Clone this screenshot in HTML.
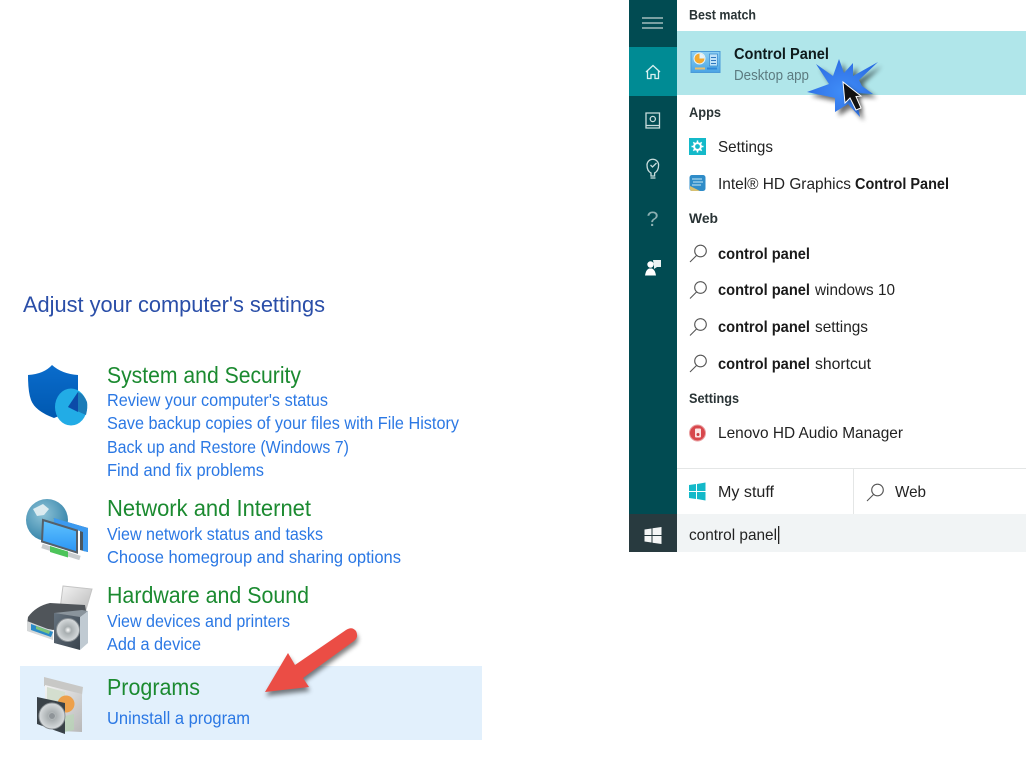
<!DOCTYPE html>
<html lang="en"><head><meta charset="utf-8"><title>Control Panel</title>
<style>
html,body{margin:0;padding:0;background:#fff;width:1026px;height:771px;overflow:hidden}
svg{display:block;filter:blur(.35px)}
text{font-family:"Liberation Sans",sans-serif;}
.t{font-size:22.5px;fill:#2a4ea8}
.h{font-size:23px;fill:#1b8a30}
.l{font-size:17.5px;fill:#2b78e4}
.b{font-size:14px;font-weight:700;fill:#2a3436}
.r{font-size:16px;fill:#222}
.rb{font-size:16px;font-weight:700;fill:#1a1a1a}
</style></head><body>
<svg width="1026" height="771" viewBox="0 0 1026 771" xmlns="http://www.w3.org/2000/svg">
<defs>
<linearGradient id="sh" x1="0" y1="0" x2="0" y2="1"><stop offset="0" stop-color="#0a6ccc"/><stop offset="1" stop-color="#0058b0"/></linearGradient>
<radialGradient id="gl" cx=".4" cy=".35" r=".75"><stop offset="0" stop-color="#8fc4d8"/><stop offset="1" stop-color="#2a7ca4"/></radialGradient>
<linearGradient id="sc" x1="0" y1="0" x2="0" y2="1"><stop offset="0" stop-color="#60c4ff"/><stop offset="1" stop-color="#2a94f4"/></linearGradient>
<linearGradient id="gr" x1="0" y1="0" x2="1" y2="1"><stop offset="0" stop-color="#f4f4f4"/><stop offset="1" stop-color="#b8b8b8"/></linearGradient>
<linearGradient id="dk" x1="0" y1="0" x2="1" y2="1"><stop offset="0" stop-color="#65727e"/><stop offset="1" stop-color="#3a444e"/></linearGradient>
<radialGradient id="cd"><stop offset="0" stop-color="#fff"/><stop offset=".3" stop-color="#a8aeb0"/><stop offset="1" stop-color="#d8dcde"/></radialGradient>
<radialGradient id="st" cx=".5" cy=".55" r=".55"><stop offset="0" stop-color="#3f8df8"/><stop offset=".7" stop-color="#3478ea"/><stop offset="1" stop-color="#2a6ee4"/></radialGradient>
<linearGradient id="cp" x1="0" y1="0" x2="0" y2="1"><stop offset="0" stop-color="#8ed0f2"/><stop offset="1" stop-color="#4aa4e4"/></linearGradient>
<filter id="s1" x="-30%" y="-30%" width="170%" height="170%"><feGaussianBlur stdDeviation="2.5"/></filter>
</defs>

<!-- left panel -->
<rect x="20" y="666" width="462" height="74" fill="#e2f0fc"/>
<text class="t" x="23" y="312" textLength="302" lengthAdjust="spacingAndGlyphs">Adjust your computer's settings</text>

<text class="h" x="107" y="383" textLength="194" lengthAdjust="spacingAndGlyphs">System and Security</text>
<text class="l" x="107" y="406" textLength="221" lengthAdjust="spacingAndGlyphs">Review your computer's status</text>
<text class="l" x="107" y="429" textLength="352" lengthAdjust="spacingAndGlyphs">Save backup copies of your files with File History</text>
<text class="l" x="107" y="453" textLength="242" lengthAdjust="spacingAndGlyphs">Back up and Restore (Windows 7)</text>
<text class="l" x="107" y="476" textLength="157" lengthAdjust="spacingAndGlyphs">Find and fix problems</text>

<text class="h" x="107" y="516" textLength="204" lengthAdjust="spacingAndGlyphs">Network and Internet</text>
<text class="l" x="107" y="540" textLength="216" lengthAdjust="spacingAndGlyphs">View network status and tasks</text>
<text class="l" x="107" y="563" textLength="294" lengthAdjust="spacingAndGlyphs">Choose homegroup and sharing options</text>

<text class="h" x="107" y="603" textLength="202" lengthAdjust="spacingAndGlyphs">Hardware and Sound</text>
<text class="l" x="107" y="627" textLength="183" lengthAdjust="spacingAndGlyphs">View devices and printers</text>
<text class="l" x="107" y="650" textLength="94" lengthAdjust="spacingAndGlyphs">Add a device</text>

<text class="h" x="107" y="695" textLength="93" lengthAdjust="spacingAndGlyphs">Programs</text>
<text class="l" x="107" y="724" textLength="143" lengthAdjust="spacingAndGlyphs">Uninstall a program</text>

<!-- shield icon -->
<path d="M28 375Q44 374 52 365Q62 374 78 375V395Q76 410 54 418Q35 411 31 400Q28 392 28 375Z" fill="url(#sh)"/>
<ellipse cx="71" cy="407" rx="16" ry="18.500" fill="#22ace6"/>
<path d="M78 392L68 407L86 415Q88 407 87 402Q84 394 78 392Z" fill="#1b7cb8"/>
<path d="M78 392L68 407L78 412Z" fill="#0c4aa8"/>

<!-- network icon -->
<circle cx="47" cy="520" r="21" fill="url(#gl)"/>
<path d="M33 509l10-5 6 5-5 6-7 1z" fill="#dcebf0"/>
<path d="M53 518l35 10v24l-8-2V530z" fill="#4a5660"/>
<path d="M54 518l34 10v24l-5-1V532l-29-9z" fill="#3c9af0"/>
<path d="M43 520l34 10.500v22l-35-11z" fill="url(#sc)" stroke="#55606a" stroke-width="2"/>
<path d="M42 546l38 12" stroke="#c8ccce" stroke-width="4.500" fill="none"/>
<path d="M50 546l18 5.500v6l-18-5.500z" fill="#4dc45a"/>

<!-- printer / hardware icon -->
<path d="M63 586l29 3-7 24-25-4z" fill="url(#gr)" stroke="#c4c4c4"/>
<path d="M28 617q8-11 22-14l35 2 3 17-35 8-26-5z" fill="#50555a"/>
<path d="M27 621l26 10v9l-26-9z" fill="#d4d7d8"/>
<path d="M31 624l22 8-2 5-20-7z" fill="#2a8ac8"/>
<path d="M36 626l14 5-1 3-13-5z" fill="#7ec47a"/>
<path d="M54 613l26 4v33l-26-7z" fill="url(#dk)"/>
<path d="M54 613l28-3 6 1-8 6z" fill="#8a949c"/>
<path d="M80 617l8-6v32l-8 7z" fill="#c0cad2"/>
<circle cx="68" cy="630" r="11.500" fill="url(#cd)" stroke="#8c9296"/>

<!-- programs icon -->
<path d="M44 677l39 10-1 8-38-9z" fill="#c8c8c6"/>
<path d="M45 685l37 9v38l-22-1-15-3z" fill="url(#gr)"/>
<path d="M47 687l18 5v30l-18-6z" fill="#d4decf"/>
<circle cx="66" cy="704" r="8.500" fill="#eda04a"/>
<path d="M65 716l9-2v16l-9 2z" fill="#b6d8b4" opacity=".6"/>
<path d="M37 697l28 6v31l-28-10z" fill="#3a4248"/>
<circle cx="52" cy="716" r="13" fill="url(#cd)" stroke="#8c9296"/>
<circle cx="52" cy="716" r="3" fill="#8e9498"/>

<!-- red arrow -->
<path d="M265 692L288 653L295 665L346 630Q352 626 356 631Q359 637 354 641L303 678L309 687Z" fill="#000" opacity=".5" filter="url(#s1)" transform="translate(1 4)"/>
<path d="M265 692L288 653L295 665L346 630Q352 626 356 631Q359 637 354 641L303 678L309 687Z" fill="#eb4d45"/>

<!-- search panel -->
<rect x="629" y="0" width="48" height="552" fill="#014b52"/>
<rect x="629" y="47" width="48" height="49" fill="#008b94"/>
<rect x="629" y="514" width="48" height="38" fill="#283a3f"/>
<rect x="677" y="514" width="349" height="38" fill="#f1f4f5"/>
<rect x="677" y="31" width="349" height="64" fill="#b0e6ea"/>
<rect x="677" y="468" width="349" height="1" fill="#e4e6e6"/>
<rect x="853" y="468" width="1" height="46" fill="#e4e6e6"/>

<!-- sidebar icons -->
<g stroke="#a2bcbd" stroke-width="1.600" fill="none">
<path d="M642 18h21M642 23h21M642 28h21"/>
</g>
<path d="M646 72l7-6.500 7 6.500M647.500 71v7.500h3.500v-4h4v4h3.500v-7.500" stroke="#d8f0f0" stroke-width="1.300" fill="none"/>
<g stroke="#c8dcdc" stroke-width="1.300" fill="none">
<path d="M646 113h13.500v15h-13.500zM646 125.500h13.500"/>
<circle cx="652.800" cy="119" r="2.600"/>
<path d="M651 176v-3q-4-2-4-8a5.800 5.800 0 0 1 11.600 0q0 6-4 8v3z"/>
<path d="M650.500 165l2 2 4-4M650.500 178h5"/>
</g>
<text x="646.500" y="226" font-size="21" fill="#8eb0b2" textLength="12" lengthAdjust="spacingAndGlyphs">?</text>
<path d="M645 275.500q1-6 4-7h3q3 1 4 7z" fill="#fff"/>
<circle cx="650.500" cy="264.500" r="3.200" fill="#fff"/>
<path d="M653 260h8v7h-4l-3 2v-3z" fill="#eaf2f2"/>
<path d="M644.500 529.500l7-1v6.500h-7zM652.500 528.300l9-1.300v8h-9zM644.500 536h7v6.500l-7-1zM652.500 536h9v8l-9-1.300z" fill="#f4f6f6"/>

<!-- CP icon -->
<rect x="691" y="51.500" width="29" height="21" fill="url(#cp)" stroke="#4a9ad8"/>
<circle cx="699.500" cy="58.500" r="5.500" fill="#f4a92e" stroke="#e4f4fc"/>
<path d="M699.500 58.500v-5a5 5 0 0 1 5 5z" fill="#e4f4fc"/>
<rect x="709.500" y="54" width="8" height="12" fill="#bfe2f8" stroke="#2f86cc" stroke-width=".7"/>
<path d="M711 57.500h5M711 60.500h5M711 63.500h5" stroke="#2f78c0"/>
<rect x="695" y="67.500" width="10" height="2" fill="#e8c070"/>
<rect x="707" y="67.500" width="10" height="2" fill="#2f88d8"/>

<!-- header text -->
<text class="b" x="689" y="19.500" textLength="67" lengthAdjust="spacingAndGlyphs">Best match</text>
<text x="734" y="59" font-size="16" font-weight="700" fill="#0e1a1c" textLength="95" lengthAdjust="spacingAndGlyphs">Control Panel</text>
<text x="734" y="80" font-size="15" fill="#5c7b80" textLength="75" lengthAdjust="spacingAndGlyphs">Desktop app</text>
<text class="b" x="689" y="117" textLength="32" lengthAdjust="spacingAndGlyphs">Apps</text>
<text class="r" x="718" y="152" textLength="55" lengthAdjust="spacingAndGlyphs">Settings</text>
<text class="r" x="718" y="189" textLength="133" lengthAdjust="spacingAndGlyphs">Intel® HD Graphics</text>
<text class="rb" x="855" y="189" textLength="94" lengthAdjust="spacingAndGlyphs">Control Panel</text>
<text class="b" x="689" y="223" textLength="29" lengthAdjust="spacingAndGlyphs">Web</text>
<text class="rb" x="718" y="259" textLength="92" lengthAdjust="spacingAndGlyphs">control panel</text>
<text class="rb" x="718" y="295" textLength="92" lengthAdjust="spacingAndGlyphs">control panel</text>
<text class="r" x="815" y="295" textLength="80" lengthAdjust="spacingAndGlyphs">windows 10</text>
<text class="rb" x="718" y="332" textLength="92" lengthAdjust="spacingAndGlyphs">control panel</text>
<text class="r" x="815" y="332" textLength="53" lengthAdjust="spacingAndGlyphs">settings</text>
<text class="rb" x="718" y="369" textLength="92" lengthAdjust="spacingAndGlyphs">control panel</text>
<text class="r" x="815" y="369" textLength="56" lengthAdjust="spacingAndGlyphs">shortcut</text>
<text class="b" x="689" y="403" textLength="50" lengthAdjust="spacingAndGlyphs">Settings</text>
<text class="r" x="718" y="438" textLength="185" lengthAdjust="spacingAndGlyphs">Lenovo HD Audio Manager</text>
<text class="r" x="718" y="497" textLength="56" lengthAdjust="spacingAndGlyphs">My stuff</text>
<text class="r" x="895" y="497" textLength="31" lengthAdjust="spacingAndGlyphs">Web</text>
<text class="r" x="689" y="540" textLength="88" lengthAdjust="spacingAndGlyphs">control panel</text>
<rect x="778" y="526" width="1.300" height="18" fill="#222"/>

<!-- search list icons -->
<g fill="none" stroke="#555" stroke-width="1.100">
<circle cx="700.500" cy="251" r="5.800"/><path d="M696.500 255.500l-6.500 6.500"/>
<circle cx="700.500" cy="287.500" r="5.800"/><path d="M696.500 292l-6.500 6.500"/>
<circle cx="700.500" cy="324.500" r="5.800"/><path d="M696.500 329l-6.500 6.500"/>
<circle cx="700.500" cy="361" r="5.800"/><path d="M696.500 365.500l-6.500 6.500"/>
<circle cx="877.500" cy="490" r="5.800"/><path d="M873.500 494.500l-6.500 6.500"/>
</g>

<!-- settings icon -->
<rect x="689" y="138" width="17" height="17" fill="#14b9c9"/>
<circle cx="697.500" cy="146.500" r="3.400" fill="none" stroke="#fff" stroke-width="2"/>
<path d="M697.500 140.500v3M697.500 149.500v3M691.500 146.500h3M700.500 146.500h3M693.300 142.300l2 2M699.700 148.700l2 2M701.700 142.300l-2 2M695.300 148.700l-2 2" stroke="#fff" stroke-width="1.500"/>
<!-- intel icon -->
<rect x="689.500" y="175" width="16" height="16" rx="2.500" fill="#2f8cc8"/>
<path d="M692 179h10M693 182h10M692 185h9" stroke="#c4e8f4"/>
<path d="M690 186l10 5h-8q-2 0-2-2z" fill="#d8c070"/>
<!-- lenovo icon -->
<circle cx="697.500" cy="433" r="8" fill="#d8474c"/>
<circle cx="697.500" cy="433" r="8" fill="none" stroke="#e9a0a2"/>
<rect x="695" y="428.500" width="6" height="9" rx="1" fill="#fbe4e4"/>
<circle cx="698" cy="434.500" r="1.500" fill="#c83a40"/>
<!-- win teal -->
<path d="M689 485l7-1v7h-7zM697 484l8.500-1.500v8.500h-8.500zM689 492h7v7l-7-1zM697 492h8.500v8.500l-8.500-1.500z" fill="#14b9c9"/>

<!-- star + cursor -->
<path d="M839 59L844 73L853 63L853 76L878 62L859 80L862 86L873 94L855 93L860 117L848 104L835 112L835 98L807 92L829 84L816 64L833 76Z" fill="#000" opacity=".55" filter="url(#s1)" transform="translate(4 4)"/>
<path d="M839 59L844 73L853 63L853 76L878 62L859 80L862 86L873 94L855 93L860 117L848 104L835 112L835 98L807 92L829 84L816 64L833 76Z" fill="url(#st)"/>
<path d="M843 82L845 103L850 98L856 110L861 108L856 96.500L861 96Z" fill="#000" opacity=".4" filter="url(#s1)" transform="translate(2 2)"/>
<path d="M843 82L845 103L850 98L856 110L861 108L856 96.500L861 96Z" fill="#111" stroke="#fff" stroke-width="1"/>
</svg>
</body></html>
